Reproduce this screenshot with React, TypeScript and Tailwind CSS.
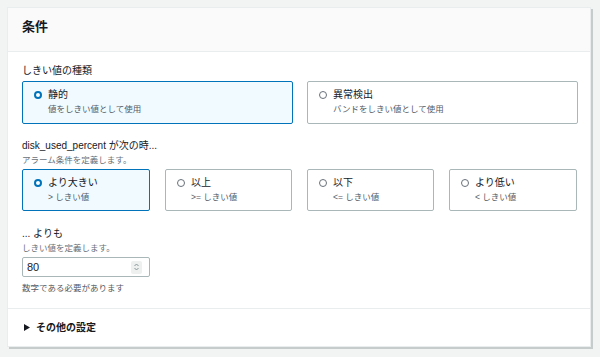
import React from "react";

interface TileProps {
  label: string;
  desc: string;
  checked?: boolean;
  className?: string;
}

const Tile: React.FC<TileProps> = ({ label, desc, checked, className }) => {
  return (
    <div
      className={
        "flex rounded-[2px] border pl-[11px] pt-[5px] " +
        (checked ? "border-[#0073bb] bg-[#f1faff] " : "border-[#aab7b8] bg-white ") +
        (className ?? "")
      }
    >
      <div className="pt-[4px] pr-[6px]">
        {checked ? (
          <div className="h-[8px] w-[8px] rounded-full border-2 border-[#0073bb] bg-white" />
        ) : (
          <div className="h-[8px] w-[8px] rounded-full border border-[#687078] bg-white" />
        )}
      </div>
      <div className="flex flex-col">
        <span className="text-[10px] leading-[16px] text-[#16191f]">{label}</span>
        <span className="text-[8.5px] leading-[13px] text-[#545b64]">{desc}</span>
      </div>
    </div>
  );
};

const App: React.FC = () => {
  return (
    <div
      className="h-[357px] w-[600px] bg-[#f2f3f3] pl-[7px] pt-[7px]"
      style={{ fontFamily: '"Liberation Sans", "Noto Sans CJK JP", sans-serif' }}
    >
      <div className="w-[584px] border border-[#eaeded] bg-white shadow-[2px_2px_0_#c6cbcc]">
        <div className="h-[44px] border-b border-[#eaeded] bg-[#fafafa] px-[14px] pt-[11px]">
          <h2 className="text-[13px] font-bold leading-[16px] text-[#16191f]">条件</h2>
        </div>

        <div className="pl-[14px] pr-[12px] pt-[11px]">
          <p className="text-[10px] leading-[16px] text-[#16191f]">しきい値の種類</p>
          <div className="mt-[2px] flex gap-[14px]">
            <Tile className="h-[43px] w-[271px]" checked label="静的" desc="値をしきい値として使用" />
            <Tile className="h-[43px] w-[271px]" label="異常検出" desc="バンドをしきい値として使用" />
          </div>

          <p className="mt-[14px] text-[10px] leading-[16px] text-[#16191f]">
            disk_used_percent が次の時...
          </p>
          <p className="text-[8.5px] leading-[13px] text-[#687078]">アラーム条件を定義します。</p>
          <div className="mt-[2px] flex gap-[15px]">
            <Tile className="h-[42px] w-[128px]" checked label="より大きい" desc="> しきい値" />
            <Tile className="h-[42px] w-[127px]" label="以上" desc=">= しきい値" />
            <Tile className="h-[42px] w-[127px]" label="以下" desc="<= しきい値" />
            <Tile className="h-[42px] w-[128px]" label="より低い" desc="< しきい値" />
          </div>

          <p className="mt-[15px] text-[10px] leading-[16px] text-[#16191f]">... よりも</p>
          <p className="text-[8.5px] leading-[13px] text-[#687078]">しきい値を定義します。</p>
          <div className="mt-[2px] flex h-[20px] w-[128px] items-center justify-between rounded-[2px] border border-[#aab7b8] pl-[4px] pr-[7px]">
            <span className="text-[11px] text-[#16191f]">80</span>
            <div className="flex h-[13px] w-[11px] items-center justify-center rounded-[2px] bg-[#eef0f0]">
              <svg width="7" height="10" viewBox="0 0 7 10" fill="none" stroke="#879596" strokeWidth="1">
                <path d="M1.5 4 L3.5 2 L5.5 4" />
                <path d="M1.5 6 L3.5 8 L5.5 6" />
              </svg>
            </div>
          </div>
          <p className="mt-[5px] pb-[13px] text-[8.5px] leading-[13px] text-[#545b64]">数字である必要があります</p>
        </div>

        <div className="flex h-[38px] items-center gap-[6px] border-t border-[#eaeded] px-[16px]">
          <svg width="6" height="7" viewBox="0 0 6 7">
            <path d="M0 0 L6 3.5 L0 7 Z" fill="#16191f" />
          </svg>
          <span className="text-[10px] font-bold text-[#16191f]">その他の設定</span>
        </div>
      </div>
    </div>
  );
};

export default App;
